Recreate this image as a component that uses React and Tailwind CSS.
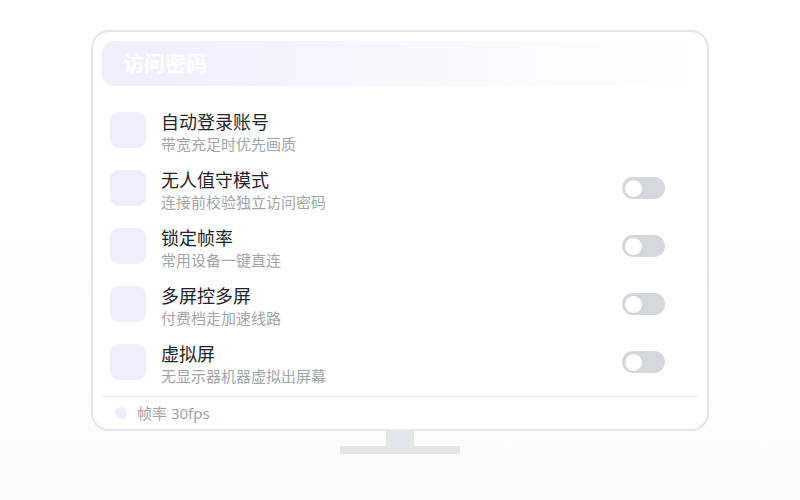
const ROWS = [
  { title: '自动登录账号', sub: '带宽充足时优先画质', toggle: false },
  { title: '无人值守模式', sub: '连接前校验独立访问密码', toggle: true },
  { title: '锁定帧率', sub: '常用设备一键直连', toggle: true },
  { title: '多屏控多屏', sub: '付费档走加速线路', toggle: true },
  { title: '虚拟屏', sub: '无显示器机器虚拟出屏幕', toggle: true },
]

function Toggle() {
  return (
    <div className="w-[43px] h-[22px] rounded-full bg-[#d5d7de] p-[2px] flex items-center">
      <div className="w-[19px] h-[19px] rounded-full bg-white border border-[#cfd2d9]" />
    </div>
  )
}

export default function App() {
  return (
    <div className="h-[500px] w-full bg-gradient-to-b from-white from-45% to-[#fafafb] flex flex-col items-center pt-[30px] font-['Noto_Sans','Noto_Sans_CJK_SC',sans-serif]">
      {/* monitor */}
      <div className="w-[618px] h-[401px] rounded-[18px] border-2 border-[#e3e6eb] bg-white px-[9px] pt-[9px] flex flex-col">
        <div className="h-[45px] rounded-xl bg-gradient-to-r from-[#f0edfd] to-white/0 flex items-center pl-[21px]">
          <span className="text-[21px] font-semibold text-white leading-none">访问密码</span>
        </div>

        <div className="mt-[15px] flex flex-col">
          {ROWS.map(r => (
            <div key={r.title} className="h-[58px] flex items-center pl-[8px] pr-[33px]">
              <div className="w-[36px] h-[36px] rounded-[9px] bg-[#f0edfd] shrink-0" />
              <div className="ml-[15px] pt-[3px] flex-1 flex flex-col">
                <span className="text-[18px] leading-[24px] text-[#1f2328]">{r.title}</span>
                <span className="text-[15px] leading-[20px] text-[#a0a4ab]">{r.sub}</span>
              </div>
              {r.toggle && <Toggle />}
            </div>
          ))}
        </div>

        <div className="mt-[5px] border-t border-[#eceef1] flex-1 flex items-center pl-[13px]">
          <div className="w-[12px] h-[12px] rounded-full bg-[#efecfd]" />
          <span className="ml-[10px] text-[15px] text-[#9ea2a9]">帧率 30fps</span>
        </div>
      </div>

      {/* stand */}
      <div className="w-[28px] h-[15px] bg-[#e2e4e8]" />
      <div className="w-[120px] h-[8px] bg-[#e2e4e8]" />
    </div>
  )
}
